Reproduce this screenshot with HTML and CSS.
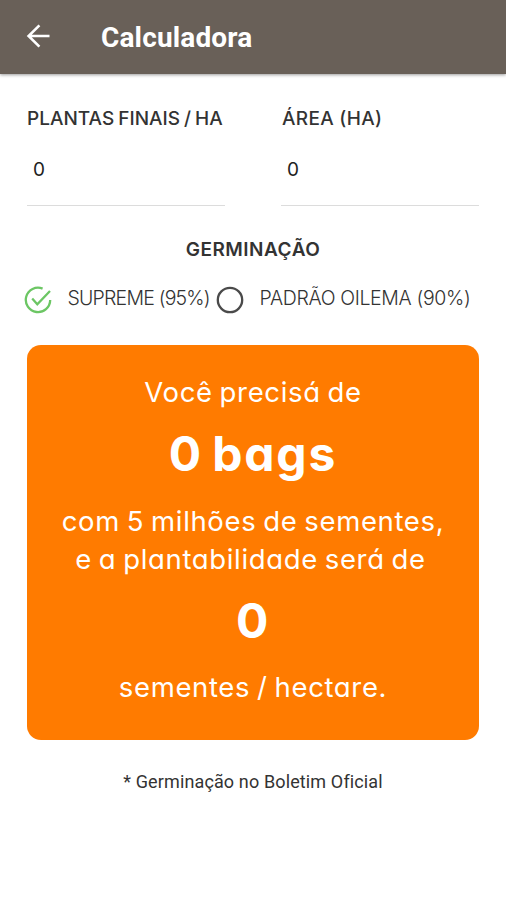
FILE: index.html
```html
<!doctype html>
<html lang="pt-BR">
<head>
    <meta charset="utf-8">
    <meta name="viewport" content="width=device-width, initial-scale=1.0">
    <title>Calculadora</title>
    <link rel="stylesheet" href="styles.css">
</head>
<body>
<header class="topbar">
    <svg class="back" viewBox="0 0 24 24" fill="none" stroke="#fff" stroke-width="2.6">
        <path d="M23.5 12H2.4M13.4 1.4L2.6 12l10.8 10.6"/>
    </svg>
    <h1 class="title">Calculadora</h1>
</header>

<div class="content">
    <!-- campos -->
    <div class="fields">
        <div class="field">
            <p class="label plantas">PLANTAS FINAIS / HA</p>
            <p class="value">0</p>
        </div>
        <div class="field">
            <p class="label area">ÁREA (HA)</p>
            <p class="value">0</p>
        </div>
    </div>

    <!-- germinação -->
    <p class="subtitle">GERMINAÇÃO</p>
    <div class="options">
        <div class="option supreme">
            <svg class="radio" viewBox="0 0 28 28" fill="none" stroke="#6cc664" stroke-width="2.3">
                <path d="M18.6 2.6A12.2 12.2 0 1 0 26.2 14"/>
                <path d="M8.2 12.6l5.1 5.6L26 5"/>
            </svg>
            <span class="optText">SUPREME (95%)</span>
        </div>
        <div class="option padrao">
            <svg class="radio" viewBox="0 0 28 28" fill="none" stroke="#4a4a4a" stroke-width="2.3">
                <circle cx="14" cy="14" r="12.2"/>
            </svg>
            <span class="optText">PADRÃO OILEMA (90%)</span>
        </div>
    </div>

    <!-- resultado -->
    <div class="result">
        <p class="text">Você precisá de</p>
        <p class="number">0 bags</p>
        <p class="text">com 5 milhões de sementes,</p>
        <p class="text wide">e a plantabilidade será de</p>
        <p class="number">0</p>
        <p class="text last">sementes / hectare.</p>
    </div>

    <p class="note">* Germinação no Boletim Oficial</p>
</div>
</body>
</html>
```

FILE: styles.css
```css
* {
    margin: 0;
    padding: 0;
    box-sizing: border-box;
}

body {
    background: #fff;
    color: #333;
    font-family: Inter, "Liberation Sans", sans-serif;
    font-feature-settings: "cv11";
    white-space: nowrap;
}

.topbar {
    display: flex;
    align-items: center;
    height: 74px;
    padding: 0 26px 3px;
    background: #696058;
    box-shadow: 0 1px 3px rgba(60, 60, 60, .5);
}

.back {
    width: 24px;
    height: 24px;
}

.title {
    margin-left: 51px;
    padding-top: 4px;
    color: #fff;
    font: bold 28px/34px Roboto, sans-serif;
    letter-spacing: .15px;
}

.content {
    padding: 31px 27px 0;
}

.fields {
    display: grid;
    grid-template-columns: 198px 198px;
    justify-content: space-between;
}

.field {
    height: 101px;
    border-bottom: 1px solid #dcdcdc;
}

.label {
    font-size: 19px;
    font-weight: 500;
    line-height: 28px;
}

.plantas {
    word-spacing: -1px;
}

.area {
    padding-left: 1px;
    letter-spacing: .3px;
}

.value {
    margin-top: 23px;
    padding-left: 6px;
    color: #222;
    font-size: 19px;
    line-height: 28px;
}

.subtitle {
    margin-top: 30px;
    font-size: 19px;
    font-weight: 600;
    line-height: 28px;
    letter-spacing: .5px;
    text-align: center;
}

.options {
    display: flex;
    margin: 20px -3.5px 0;
}

.option {
    display: flex;
    align-items: center;
    height: 32px;
}

.supreme {
    width: 192px;
    letter-spacing: -.8px;
}

.padrao {
    letter-spacing: -.35px;
}

.radio {
    flex-shrink: 0;
    width: 28px;
    height: 28px;
    margin-right: 16px;
}

.optText {
    font-size: 19.5px;
    font-weight: 300;
    line-height: 28px;
    margin-bottom: 5px;
}

.result {
    height: 395px;
    margin-top: 29px;
    padding-top: 28px;
    border-radius: 14px;
    background: #ff7b00;
    color: #fff;
    text-align: center;
}

.text {
    font-size: 27.5px;
    line-height: 38px;
    letter-spacing: .65px;
    word-spacing: -1.5px;
}

.wide {
    padding-right: 5px;
}

.last {
    margin-top: -1px;
}

.number {
    margin-bottom: 5px;
    font-size: 48px;
    font-weight: 700;
    line-height: 86px;
    letter-spacing: 1.8px;
    word-spacing: -4px;
}

.note {
    margin-top: 28px;
    font: 18px/28px Roboto, sans-serif;
    letter-spacing: .13px;
    text-align: center;
}
```
